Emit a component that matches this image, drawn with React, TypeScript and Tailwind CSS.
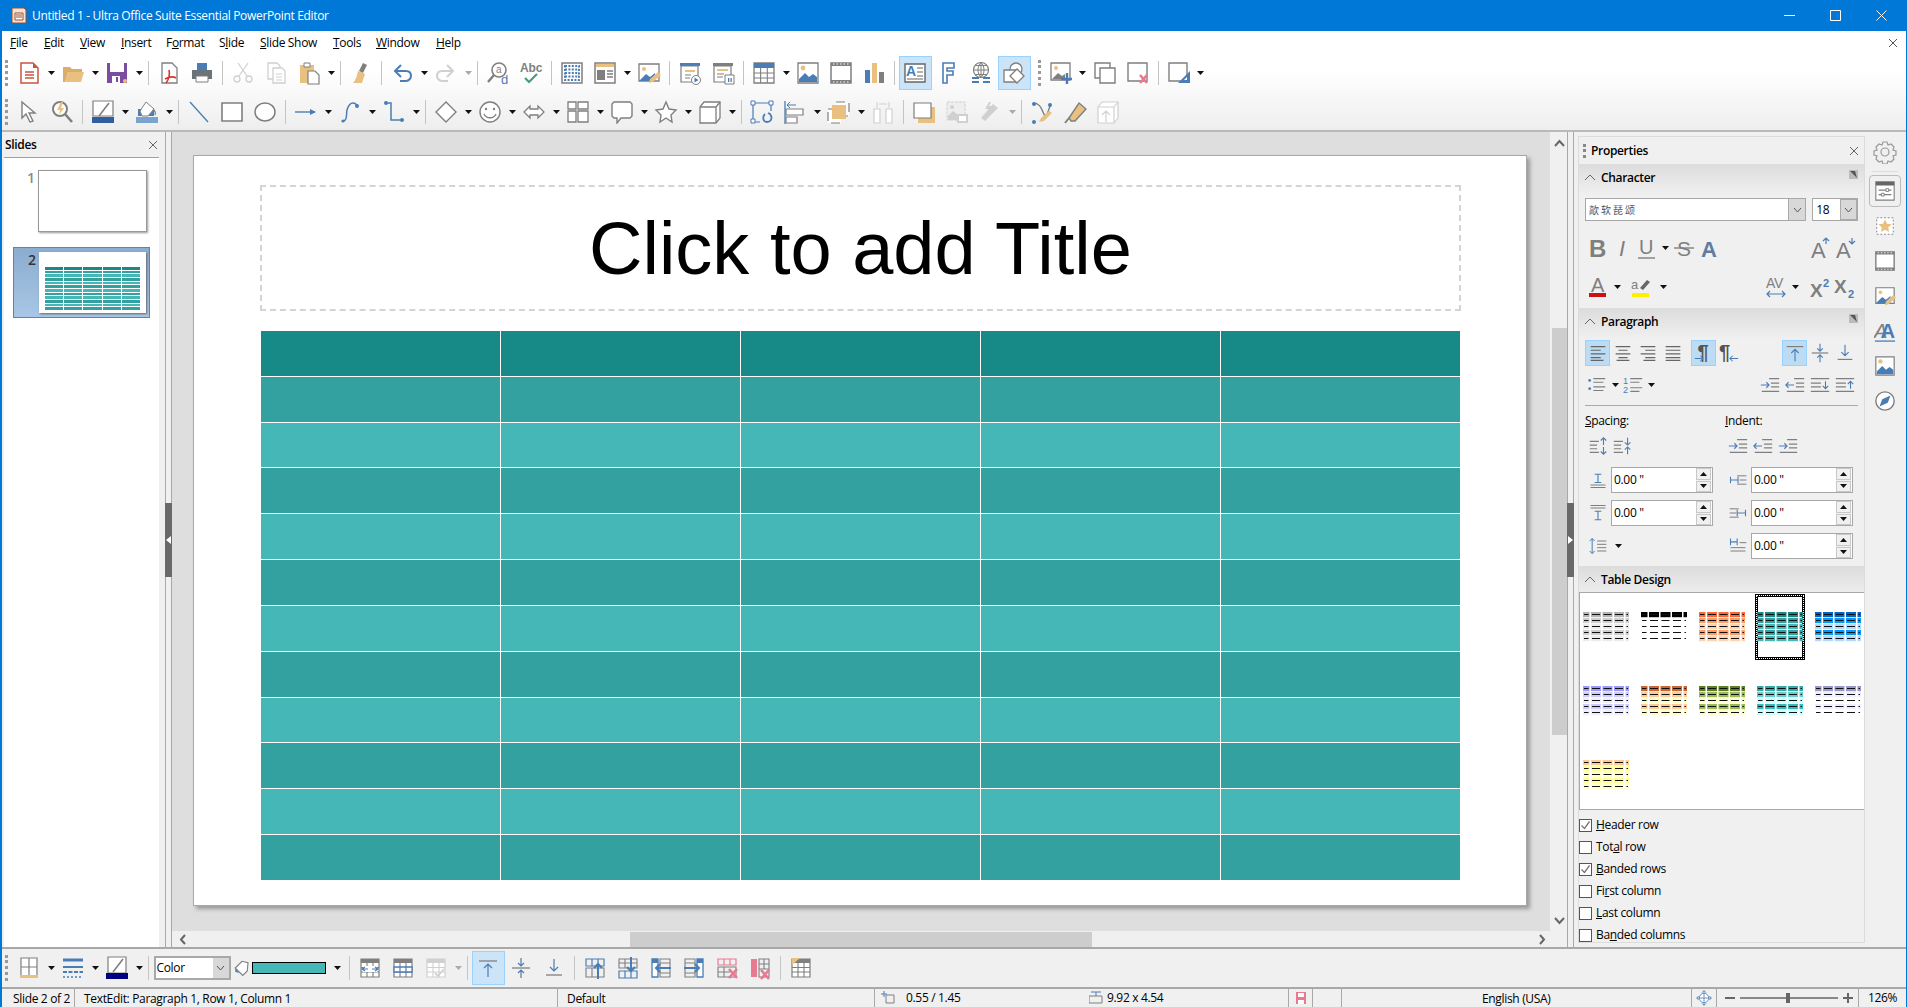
import { ReactNode } from "react";

const BL = "#4a7db5";
const GR = "#7f7f7f";
const OR = "#e9c07f";
const LG = "#d0d0d0";
const PK = "#e8798f";

const line = (d: string, c = GR, w = 1.5) => <path d={d} fill="none" stroke={c} strokeWidth={w} />;
const word = (t: string, x: number, y: number, s: number, c = GR, extra = {}) => (
    <text x={x} y={y} fontSize={s} fill={c} fontFamily="Liberation Sans, sans-serif" {...extra}>{t}</text>
);
const tableGrid = (c = GR, top = GR) => (
    <>
        <path d="M3 3h18v18H3z" fill="#fff" stroke={c} strokeWidth="1.2" />
        <path d="M3 3h18v4H3z" fill={top} />
        {line("M3 11.5h18M3 16h18M9 7v14M15 7v14", c, 1.1)}
    </>
);

const icons: Record<string, ReactNode> = {
    new: <><path d="M4 2h12l5 5v15H4z" fill="#fff" stroke="#c8553d" strokeWidth="1.5" /><path d="M16 2l5 5h-5z" fill="#c8553d" />{line("M8 11h9M8 14h9M8 17h9", "#c8553d", 1.3)}</>,
    open: <><path d="M2 21V6h7l2 2h10v3H7l-3 10z" fill="#d9ae6a" /><path d="M4 21l3-10h16l-3 10z" fill={OR} /></>,
    save: <><path d="M2 2h20v20H2z" fill="#7c4ca0" /><path d="M5 2h14v9H5z" fill="#fff" /><path d="M7 15h8v7H7z" fill="#fff" /><path d="M11 16h2v5h-2z" fill="#7c4ca0" /><circle cx="20" cy="20" r="2" fill={OR} /></>,
    pdf: <><path d="M5 2h10l5 5v15H5z" fill="#fff" stroke={GR} strokeWidth="1.3" />{line("M9 22c3-4 4-9 3-13M8 18c4-2 8-3 11-1", "#d8352a", 1.6)}</>,
    print: <><path d="M7 2h10v7H7z" fill="#4a7db5" /><path d="M2 9h20v9H2z" fill="#6b7278" /><path d="M6 15h12v6H6z" fill="#fff" stroke={GR} /></>,
    cut: <>{line("M7 2l9 13M17 2L8 15", LG, 1.3)}<circle cx="6" cy="18" r="3" fill="none" stroke={LG} strokeWidth="1.3" /><circle cx="18" cy="18" r="3" fill="none" stroke={LG} strokeWidth="1.3" /></>,
    copy: <><path d="M4 2h9l3 3v13H4z" fill="#fff" stroke={LG} strokeWidth="1.3" /><path d="M9 7h9l3 3v12H9z" fill="#fff" stroke={LG} strokeWidth="1.3" />{line("M12 13h6M12 16h6M12 19h6", LG, 1)}</>,
    paste: <><path d="M3 4h14v18H3z" fill={OR} /><path d="M7 2h6v4H7z" fill="#fff" stroke={GR} /><path d="M11 10h7l4 4v9H11z" fill="#fff" stroke={GR} strokeWidth="1.2" /></>,
    clear: <><path d="M14 2l4 2-4 8-4-2z" fill={GR} /><path d="M9 10l7 3-3 9H4c3-3 4-8 5-12z" fill={OR} /></>,
    undo: <>{line("M6 10h10c4 0 5 3 5 5s-2 5-5 5h-6", BL, 2)}{line("M11 4l-6 6 6 6", BL, 2)}</>,
    redo: <>{line("M18 10H8c-4 0-5 3-5 5s2 5 5 5h6", LG, 2)}{line("M13 4l6 6-6 6", LG, 2)}</>,
    find: <><circle cx="13" cy="9" r="7" fill="#fff" stroke={GR} strokeWidth="1.6" />{line("M8 14l-6 7", GR, 2.4)}{word("a", 10, 12, 10)}{word("d", 15, 23, 13, BL)}</>,
    spell: <>{word("Abc", 1, 11, 12, GR, { fontWeight: 700, textLength: 22 })}{line("M6 17l4 4 8-8", "#4e9a7f", 2.2)}</>,
    grid: <><path d="M2 2h20v20H2z" fill="#fff" stroke={GR} strokeWidth="1.5" /><path d="M5 5h14v14H5z" fill="none" stroke={BL} strokeWidth="2" strokeDasharray="2 1.4" /><path d="M5 8.5h14M5 12h14M5 15.5h14" stroke={BL} strokeWidth="1.8" strokeDasharray="2 1.4" /></>,
    view: <><path d="M2 2h20v20H2z" fill="#fff" stroke={GR} strokeWidth="1.5" /><path d="M3 3h18v3H3z" fill={OR} /><path d="M4 9h8v10H4z" fill={GR} />{line("M14 10h6M14 13h6M14 16h6", GR, 1.3)}</>,
    imgedit: <><path d="M2 3h20v17H2z" fill="#fff" stroke={GR} strokeWidth="1.3" /><circle cx="7" cy="8" r="2" fill={OR} /><path d="M2 20l7-7 4 3 5-4v8z" fill={BL} /><path d="M12 22l1-4 8-7 3 3-8 7z" fill={OR} /></>,
    show: <><path d="M2 2h20v3H2z" fill={BL} /><path d="M3 5h17v16H3z" fill="#fff" stroke={GR} strokeWidth="1.2" /><path d="M7 9h10v2H7z" fill={OR} />{line("M7 14h6M7 17h5", GR, 1.2)}<circle cx="18" cy="19" r="4.5" fill="#fff" stroke={GR} /><path d="M16.5 16.5l4 2.5-4 2.5z" fill={BL} /></>,
    present: <><path d="M2 2h20v3H2z" fill={GR} /><path d="M3 5h17v16H3z" fill="#fff" stroke={GR} strokeWidth="1.2" /><path d="M6 8h11v2H6z" fill={OR} />{line("M6 13h7M6 16h6", GR, 1.2)}<path d="M14 14h9v9h-9z" fill="#fff" stroke={GR} /><path d="M17 17h1.3v4H17zM19.5 17h1.3v4h-1.3z" fill={BL} /></>,
    table: <><path d="M2 2h20v20H2z" fill="#fff" stroke={GR} strokeWidth="1.3" /><path d="M2 2h20v5H2z" fill={BL} />{line("M2 12h20M2 17h20M8.6 7v15M15.3 7v15", GR, 1.1)}</>,
    image: <><path d="M2 2h20v20H2z" fill="#fff" stroke={GR} strokeWidth="1.3" /><circle cx="7" cy="7" r="2.4" fill={OR} /><path d="M3 21v-3l6-6 4 4 4-3 4 3v5z" fill={BL} /></>,
    movie: <><path d="M2 2h20v20H2z" fill="#fff" stroke={GR} strokeWidth="1.5" /><path d="M2 2h20v3H2zM2 19h20v3H2z" fill={GR} /><path d="M4 3h16M4 21h16" stroke="#fff" strokeDasharray="1.5 2" /></>,
    chart: <><path d="M3 9h5v13H3z" fill={BL} /><path d="M10 2h5v20h-5z" fill={OR} /><path d="M17 11h5v11h-5z" fill={GR} /></>,
    textbox: <><path d="M2 3h20v18H2z" fill="#fff" stroke="#666" strokeWidth="1.4" />{word("A", 3, 15, 14, BL, { fontWeight: 700 })}{line("M14 7h6M14 11h6M14 15h6M4 18h16", "#666", 1.1)}</>,
    fontwork: <path d="M7 2h11v5h-7v3h6v4h-6v8H7z" fill="#fff" stroke={BL} strokeWidth="1.6" />,
    link: <><circle cx="12" cy="9" r="7.5" fill="#fff" stroke={GR} strokeWidth="1.2" />{line("M4.5 9h15M12 1.5v15M6 4.5h12M6 13.5h12M12 1.5c-4 4-4 11 0 15M12 1.5c4 4 4 11 0 15", GR, 1)}{line("M3 17h7M14 17h7M3 21h7M14 21h7", BL, 2)}</>,
    shapes: <><circle cx="14" cy="8" r="6" fill="#fff" stroke={GR} strokeWidth="1.3" /><path d="M2 9h12v12H2z" fill="#fff" stroke={GR} strokeWidth="1.3" /><path d="M15 8l7 7-7 7-7-7z" fill="#fff" stroke={GR} strokeWidth="1.3" /></>,
    addimg: <><path d="M2 2h19v17H2z" fill="#fff" stroke={GR} strokeWidth="1.3" /><circle cx="7" cy="7" r="2" fill={OR} /><path d="M3 18l6-6 4 3 3-2v5z" fill={GR} />{line("M18 12v11M12 18h11", BL, 2.4)}</>,
    dup: <><path d="M2 2h15v15H2z" fill="#fff" stroke={GR} strokeWidth="1.4" /><path d="M7 7h15v15H7z" fill="#fff" stroke={GR} strokeWidth="1.4" /></>,
    del: <><path d="M2 2h19v18H2z" fill="#fff" stroke={GR} strokeWidth="1.4" />{line("M14 14l7 8M21 14l-7 8", PK, 2.6)}</>,
    master: <><path d="M2 2h18v18H2z" fill="#fff" stroke={GR} strokeWidth="1.4" /><path d="M11 22L23 10v12z" fill={BL} /><path d="M17 19h3v-3z" fill="#fff" /></>,
    select: <path d="M5 2l13 11h-6l4 8-3 1-4-8-4 4z" fill="#fff" stroke={GR} strokeWidth="1.4" />,
    zoom: <><circle cx="10" cy="9" r="7" fill="#fff" stroke={GR} strokeWidth="2" /><path d="M11 2L7 10h3l-1 5 5-7h-3l2-6z" fill={OR} />{line("M15 14l7 8", GR, 2.6)}</>,
    lineclr: <><path d="M2 1h20v15H2z" fill="#fff" stroke={GR} strokeWidth="1.2" />{line("M18 3L8 16", GR, 1.6)}<path d="M1 17h22v6H1z" fill="#2f5f9e" /></>,
    fillclr: <><path d="M3 9h16v7H3z" fill={BL} /><path d="M11 2l8 7-6 7H7L5 11z" fill="#fff" stroke={GR} />{line("M18 9c2 2 3 4 2 6", GR, 1.2)}<path d="M1 17h22v6H1z" fill="#7ba3cf" /></>,
    dline: line("M3 2l18 20", BL, 1.3),
    rect: <path d="M2 3h20v18H2z" fill="#fff" stroke={GR} strokeWidth="1.6" />,
    ellipse: <ellipse cx="12" cy="12" rx="10" ry="9" fill="#fff" stroke={GR} strokeWidth="1.5" />,
    arrowl: <>{line("M1 12h20", BL, 1.4)}<path d="M16 9l6 3-6 3z" fill={BL} /></>,
    curve: <>{line("M5 21c5 0 3-8 4-11s2-7 6-7c2 0 3 1 4 2", BL, 1.5)}<circle cx="19" cy="6" r="2" fill={BL} /><circle cx="5" cy="21" r="1.6" fill={BL} /></>,
    conn: <>{line("M4 3h5v17h10", BL, 1.5)}<circle cx="4" cy="3" r="2" fill={BL} /><circle cx="20" cy="20" r="2" fill={BL} /></>,
    diamond: <path d="M12 2l10 10-10 10L2 12z" fill="#fff" stroke={GR} strokeWidth="1.4" />,
    smile: <><circle cx="12" cy="12" r="10" fill="#fff" stroke={GR} strokeWidth="1.4" /><circle cx="8" cy="9" r="1.2" fill={GR} /><circle cx="16" cy="9" r="1.2" fill={GR} />{line("M6 14c2 5 10 5 12 0", GR, 1.3)}</>,
    dbl: <path d="M2 12l6-6v3h8V6l6 6-6 6v-3H8v3z" fill="#fff" stroke={GR} strokeWidth="1.3" />,
    flow: <><path d="M2 2h8v7H2zM12 2h10v7H12zM2 11h8v11H2zM12 11h10v11H12z" fill="#fff" stroke={GR} strokeWidth="1.3" /></>,
    callout: <path d="M4 2h16l2 2v12l-2 2h-9l-4 5v-5H4l-2-2V4z" fill="#fff" stroke={GR} strokeWidth="1.4" />,
    star: <path d="M12 2l3 7 7 1-5 5 1 7-6-4-6 4 1-7-5-5 7-1z" fill="#fff" stroke={GR} strokeWidth="1.4" />,
    cube: <><path d="M2 7l4-5h16v16l-4 5H2z" fill="#fff" stroke={GR} strokeWidth="1.3" />{line("M2 7h16v16M18 7l4-5", GR, 1.3)}</>,
    rotate: <>{line("M4 3h16M3 4v17M4 22h6M21 4v7", BL, 1.2)}<path d="M1 1h4v4H1zM19 1h4v4h-4zM1 19h4v4H1z" fill="#fff" stroke={BL} />{line("M15 14c-3 3-2 8 2 8s6-4 3-8l-2-1", BL, 1.8)}</>,
    align: <>{line("M2 1v23", BL, 1.3)}{line("M4 5h9M4 5l3-3M4 5l3 3", BL, 1)}<path d="M3 9h17v6H3zM3 17h11v6H3z" fill="#fff" stroke={GR} strokeWidth="1.2" /></>,
    arrange: <><path d="M9 2h13v14H9z" fill="#fff" stroke={GR} strokeWidth="1.2" strokeDasharray="9 5" /><path d="M1 9h13v14H1z" fill="#fff" stroke={GR} strokeWidth="1.2" strokeDasharray="9 5" /><path d="M5 5h14v14H5z" fill={OR} /></>,
    distrib: <><path d="M3 9h6v14H3zM15 9h6v14h-6z" fill="#fff" stroke={LG} strokeWidth="1.2" />{line("M6 2v6M18 2v6M8 4h8", LG, 1.1)}</>,
    shadow: <><path d="M6 7h17v16H6z" fill={OR} /><path d="M2 3h17v15H2z" fill="#fff" stroke={GR} strokeWidth="1.2" /></>,
    crop: <><path d="M2 2h18v18H2z" fill="#eee" stroke={LG} strokeDasharray="3 1" /><circle cx="7" cy="7" r="2" fill={LG} /><path d="M3 16l5-5 5 4v5H3z" fill={LG} /><path d="M13 15h9v7h-9z" fill="#fff" stroke={LG} strokeWidth="2" /></>,
    effects: <><path d="M7 21l-4-3 12-14 5 4z" fill={LG} /><path d="M11 2L7 9h4l-2 4 6-7h-4l2-4z" fill={LG} /></>,
    points: <>{line("M3 3c6 0 8 4 10 9s3 7 7-6", GR, 1.4)}<circle cx="4" cy="4" r="2" fill={BL} /><circle cx="20" cy="5" r="2" fill={BL} /><circle cx="4" cy="22" r="2" fill={BL} /><path d="M9 22l2-4 8-7 3 2-8 8z" fill={OR} /></>,
    glue: <><path d="M6 18L16 3l7 6-11 12H8z" fill={OR} stroke={GR} strokeWidth="1.4" />{line("M2 23l4-5", GR, 2)}</>,
    extrude: <><path d="M2 7l4-5h16v16l-4 5H2z" fill="#fff" stroke={LG} strokeWidth="1.2" />{line("M2 7h16v16M18 7l4-5M10 22V11M6 15l4-4 4 4", LG, 1.2)}</>,
    settings: <><circle cx="12" cy="12" r="4" fill="none" stroke="#999" strokeWidth="1.2" /><path d="M10 2h4l1 3 3-1 3 3-1 3 3 1v4l-3 1 1 3-3 3-3-1-1 3h-4l-1-3-3 1-3-3 1-3-3-1v-4l3-1-1-3 3-3 3 1z" fill="none" stroke="#999" strokeWidth="1.2" /></>,
    props: <><path d="M2 2h20v20H2z" fill="#fff" stroke={GR} strokeWidth="1.2" /><path d="M2 2h20v4H2z" fill="#666" />{line("M5 11h14M5 16h14", GR, 1.2)}<path d="M13 9.5h3v3h-3zM8 14.5h3v3H8z" fill="#fff" stroke={GR} /></>,
    gallery: <><path d="M3 3h18v18H3z" fill="#fff" stroke={GR} strokeDasharray="2 2" /><path d="M12 5l2.2 4.6 5 .6-3.7 3.4 1 5-4.5-2.5L7.500 18.600l1-5-3.700-3.400 5-.6z" fill={OR} /></>,
    aa: <>{word("A", 0, 20, 22, GR, { fontStyle: "italic" })}{word("A", 7, 20, 22, BL, { fontWeight: 700 })}{line("M1 23h22", BL, 1.4)}</>,
    nav: <><circle cx="12" cy="12" r="10" fill="#fff" stroke={GR} strokeWidth="1.5" /><path d="M18 6l-3 8-9 4 3-8z" fill={BL} /></>,
    fit: <><circle cx="12" cy="12" r="7" fill="#fff" stroke={BL} strokeWidth="1.2" />{line("M12 1v22M1 12h22", BL, 1.2)}{line("M9 4l3-3 3 3M9 20l3 3 3-3M4 9l-3 3 3 3M20 9l3 3-3 3", BL, 1.2)}</>,
    bold: word("B", 3, 21, 24, GR, { fontWeight: 700 }),
    ital: word("I", 8, 20, 22, GR, { fontStyle: "italic" }),
    under: <>{word("U", 4, 18, 20, GR)}{line("M3 22h17", GR, 1.4)}</>,
    strike: <>{word("S", 5, 20, 21, GR)}{line("M2 12h20", GR, 1.4)}</>,
    ashadow: <>{word("A", 4, 21, 22, "#5f7d9e", { fontWeight: 700 })}</>,
    grow: <>{word("A", 3, 22, 22, GR)}{line("M18 8V2M15 5l3-3 3 3", BL, 1.2)}</>,
    shrink: <>{word("A", 3, 22, 22, GR)}{line("M19 2v6M16 5l3 3 3-3", BL, 1.2)}</>,
    fontclr: <>{word("A", 5, 17, 20, GR)}<path d="M3 18h17v4H3z" fill="#cc1111" /></>,
    hilite: <>{word("a", 2, 14, 13, GR)}<path d="M11 13l7-8 3 2-7 8z" fill="#666" /><path d="M3 18h17v4H3z" fill="#ffee00" /></>,
    kern: <>{word("AV", 2, 13, 14, GR)}{line("M3 19h18M6 16l-3 3 3 3M18 16l3 3-3 3", BL, 1.2)}</>,
    sup: <>{word("X", 2, 22, 19, GR, { fontWeight: 700 })}{word("2", 15, 12, 11, BL, { fontWeight: 700 })}</>,
    sub: <>{word("X", 1, 18, 19, GR, { fontWeight: 700 })}{word("2", 15, 23, 11, BL, { fontWeight: 700 })}</>,
    left: line("M4 5h16M4 9h11M4 13h16M4 17h11M4 20h14", "#666", 1.2),
    center: line("M4 5h16M7 9h10M4 13h16M7 17h10M5 20h14", "#666", 1.2),
    right: line("M4 5h16M9 9h11M4 13h16M9 17h11M7 20h13", "#666", 1.2),
    just: line("M4 5h16M4 9h16M4 13h16M4 17h16M4 20h16", "#666", 1.2),
    ltr: <>{word("¶", 5, 19, 22, "#555", { fontWeight: 700 })}{line("M2 18h9M8 15l3 3-3 3", BL, 1.1)}</>,
    rtl: <>{word("¶", 1, 19, 22, "#555", { fontWeight: 700 })}{line("M13 18h9M16 15l-3 3 3 3", BL, 1.1)}</>,
    vtop: <>{line("M3 5h18", GR, 1.3)}{line("M12 21V8M8 12l4-4 4 4", BL, 1.2)}</>,
    vmid: <>{line("M3 12h18", GR, 1.3)}{line("M12 2v8M9 7l3 3 3-3M12 22v-8M9 17l3-3 3 3", BL, 1.2)}</>,
    vbot: <>{line("M4 19h16", GR, 1.3)}{line("M12 3v12M8 11l4 4 4-4", BL, 1.2)}</>,
    bullet: <><circle cx="4" cy="7" r="1.500" fill={BL} /><circle cx="4" cy="16" r="1.500" fill={BL} />{line("M8 5h13M8 9h11M8 14h13M8 18h11", GR, 1.2)}</>,
    number: <>{word("1", 1, 11, 10, BL)}{word("2", 1, 21, 10, BL)}{line("M9 5h13M9 9h10M9 15h13M9 19h10", GR, 1.2)}</>,
    incind: <>{line("M11 5h11M13 10h9M13 14h9M3 19h19", GR, 1.2)}{line("M2 12h9M8 9l3 3-3 3", BL, 1.2)}</>,
    decind: <>{line("M11 5h11M13 10h9M13 14h9M3 19h19", GR, 1.2)}{line("M11 12H2M5 9l-3 3 3 3", BL, 1.2)}</>,
    downsp: <>{line("M2 5h20M2 10h11M2 14h11M2 19h20", GR, 1.2)}{line("M18 8v8M15 13l3 3 3-3", BL, 1.2)}</>,
    upsp: <>{line("M2 5h20M2 10h11M2 14h11M2 19h20", GR, 1.2)}{line("M18 16V8M15 11l3-3 3 3", BL, 1.2)}</>,
    spinc: <>{line("M3 7h10M3 11h8M3 15h8M3 19h10", GR, 1.2)}{line("M18 11V3M15 6l3-3 3 3M18 13v8M15 18l3 3 3-3", BL, 1.2)}</>,
    spdec: <>{line("M2 7h10M2 11h8M2 15h8M2 19h10", GR, 1.2)}{line("M17 3v8M14 8l3 3 3-3M17 21v-8M14 16l3-3 3 3", BL, 1.2)}</>,
    above: <>{line("M3 18h18M3 21h18", GR, 1.2)}{line("M8 5h8M12 5v10M8 15h8", BL, 1.3)}</>,
    below: <>{line("M3 3h18M3 6h18", GR, 1.2)}{line("M8 10h8M12 10v10M8 20h8", BL, 1.3)}</>,
    befor: <>{line("M11 7h11M11 17h11M14 12h8", GR, 1.2)}{line("M3 8v8M3 12h9M12 8v8", BL, 1.3)}</>,
    after: <>{line("M2 7h11M2 17h11M2 12h8", GR, 1.2)}{line("M21 8v8M11 12h10M11 8v8", BL, 1.3)}</>,
    first: <>{line("M14 8h8M3 14h18M3 18h18", GR, 1.2)}{line("M3 3v8M11 3v8M3 7h8", BL, 1.3)}</>,
    lnsp: <>{line("M11 6h11M11 10h11M11 14h11M11 18h11", GR, 1.2)}{line("M5 3v18M2 6l3-3 3 3M2 18l3 3 3-3", BL, 1.2)}</>,
    bdr: <><path d="M4 2h16v18H4z" fill="#fff" stroke={GR} strokeWidth="1.2" />{line("M4 11h16M12 2v18", GR, 1.2)}<path d="M3 19h18v3H3z" fill={OR} /></>,
    bstyle: <>{line("M2 4h20", BL, 3)}{line("M2 11h20", BL, 2)}<path d="M2 16h20" stroke={BL} strokeWidth="2" strokeDasharray="4 1.500" /><path d="M2 21h20" stroke={BL} strokeWidth="1.500" strokeDasharray="2 2" /></>,
    bclr: <><path d="M3 1h18v16H3z" fill="#fff" stroke={GR} strokeWidth="1.2" />{line("M18 3L8 16", GR, 1.6)}<path d="M1 17h22v6H1z" fill="#000080" /></>,
    tmerge: <>{tableGrid()}<path d="M5 10h14v6H5z" fill="#fff" />{line("M4 13h6M7 11l-3 2 3 2M20 13h-6M17 11l3 2-3 2", BL, 1.2)}</>,
    tsplit: <>{tableGrid()}<path d="M3 11h18v5H3z" fill="#fff" stroke={BL} strokeWidth="1.3" />{line("M9 11v5M15 11v5", BL, 1.2)}</>,
    tprot: <>{tableGrid(LG, LG)}{line("M11 17l3 3 6-7", LG, 1.8)}</>,
    rowup: <>{line("M3 3h18v7H3zM9 3v7M15 3v7", BL, 1.2)}{line("M3 12h18v9H3zM9 12v9M15 12v9", GR, 1.1)}{line("M15 23V8M11 12l4-4 4 4", BL, 2)}</>,
    rowdn: <>{line("M3 3h18v9H3zM9 3v9M15 3v9M3 7h18", GR, 1.1)}{line("M3 15h18v7H3zM9 15v7M15 15v7", BL, 1.2)}{line("M15 1v14M11 11l4 4 4-4", BL, 2)}</>,
    colleft: <><path d="M3 3h6v18H3z" fill="#fff" stroke={BL} strokeWidth="1.3" /><path d="M3 3h6v4H3z" fill={BL} />{line("M11 3h10v18H11zM11 7h10M11 12h10M11 17h10", GR, 1.1)}{line("M22 12H7M11 8l-4 4 4 4", BL, 2)}</>,
    colright: <><path d="M15 3h6v18h-6z" fill="#fff" stroke={BL} strokeWidth="1.3" /><path d="M15 3h6v4h-6z" fill={BL} />{line("M3 3h10v18H3zM3 7h10M3 12h10M3 17h10", GR, 1.1)}{line("M2 12h15M13 8l4 4-4 4", BL, 2)}</>,
    rowdel: <>{line("M3 3h18v6H3zM9 3v6M15 3v6", PK, 1.2)}{line("M3 11h18v10H3zM9 11v10M3 16h12", GR, 1.1)}{line("M14 13l8 9M22 13l-8 9", PK, 2.6)}</>,
    coldel: <><path d="M3 3h6v18H3z" fill={PK} />{line("M11 3h10v18H11zM11 8h10M11 13h10M16 3v10", GR, 1.1)}{line("M13 14l8 9M21 14l-8 9", PK, 2.6)}</>,
    tstyle: <>{tableGrid()}<path d="M3 2h8l-8 7z" fill={OR} /></>,
};

function Icon({ name, size = 24 }: { name: string; size?: number }) {
    return <svg width={size} height={size} viewBox="0 0 24 24" className="shrink-0">{icons[name]}</svg>;
}

function Arrow() {
    return <svg width="7" height="4" className="shrink-0"><path d="M0 0h7L3.500 4z" fill="#111" /></svg>;
}

function Chevron({ d }: { d: string }) {
    return <svg width="11" height="9" viewBox="0 0 11 9"><path d={d} fill="none" stroke="#666" strokeWidth="2" /></svg>;
}

// a: drop arrow, s: separator, h/H: drag handle, ! in front: pressed button
function Tool({ item }: { item: string }) {
    if (item === "a") return <div className="w-[11px] h-[34px] flex items-center justify-center shrink-0"><Arrow /></div>;
    if (item === "da") return <div className="w-[11px] h-[34px] flex items-center justify-center shrink-0"><svg width="7" height="4"><path d="M0 0h7L3.500 4z" fill="#aaa" /></svg></div>;
    if (item === "s") return <div className="w-[8px] h-[24px] flex justify-center shrink-0"><div className="w-px h-full bg-[#c4c4c4]" /></div>;
    if (item === "h") return <div className="w-[7.5px] h-[26px] shrink-0 border-l-[3px] border-dotted border-[#999] ml-[3px]" />;
    if (item === "H") return <div className="w-[6.5px] h-[26px] shrink-0 border-l-[3px] border-dotted border-[#999] ml-[7px]" />;
    const active = item.startsWith("!");
    return (
        <div className={active
            ? "w-[33px] h-[34px] flex items-center justify-center shrink-0 bg-[#cce4f7] border border-[#99d1ff]"
            : "w-[33px] h-[34px] flex items-center justify-center shrink-0"}>
            <Icon name={active ? item.slice(1) : item} />
        </div>
    );
}

const row1 = "new a open a save a s pdf print s cut copy paste a s clear s undo a redo da s find spell s grid view a imgedit s show present s table a image movie chart s !textbox fontwork link !shapes H addimg a dup del s master a".split(" ");
const row2 = "select zoom s lineclr a fillclr a s dline rect ellipse s arrowl a curve a conn a s diamond a smile a dbl a flow a callout a star a cube a s rotate align a arrange a distrib s shadow crop effects da s points glue extrude".split(" ");
const row3 = "bdr a bstyle a bclr a s".split(" ");
const row4 = "tmerge tsplit tprot da s !vtop vmid vbot s rowup rowdn colleft colright rowdel coldel s tstyle".split(" ");

const menus: [string, string, string, number][] = [
    ["", "F", "ile", 34], ["", "E", "dit", 36], ["", "V", "iew", 41], ["", "I", "nsert", 45], ["F", "o", "rmat", 53],
    ["S", "l", "ide", 41], ["", "S", "lide Show", 73], ["", "T", "ools", 43], ["", "W", "indow", 60], ["", "H", "elp", 40],
];

const thumbs = [
    ["#b4b4b4", "#cfcfcf", "#ececec", "#cfcfcf", "#ececec"],
    ["#000000", "#ffffff", "#ffffff", "#ffffff", "#ffffff"],
    ["#ff6633", "#ff9c66", "#ffd3b0", "#ff9c66", "#ffd3b0"],
    ["#178a88", "#32a1a0", "#45b7b7", "#32a1a0", "#45b7b7"],
    ["#0066cc", "#0099ff", "#b3d9ff", "#0099ff", "#b3d9ff"],
    ["#9999ff", "#ccccff", "#eeeeff", "#ccccff", "#eeeeff"],
    ["#cc6633", "#ffcc99", "#ffffcc", "#ffcc99", "#ffffcc"],
    ["#5c8020", "#99bb55", "#ffffcc", "#99bb55", "#ffffcc"],
    ["#33aaaa", "#66cccc", "#ccffff", "#33bbbb", "#ccffff"],
    ["#9999cc", "#eeeeff", "#ffffff", "#eeeeff", "#ffffff"],
    ["#ffcc99", "#ffff99", "#ffffcc", "#ffff99", "#ffffcc"],
];

function TableThumb({ colors, selected }: { colors: string[]; selected: boolean }) {
    const cols: [number, number][] = [[0, 6.5], [8, 10], [19.5, 10], [31, 10], [42.5, 3.5]];
    return (
        <div className={selected
            ? "w-[50px] h-[66px] flex items-center justify-center border-[3px] border-black outline-1 -outline-offset-2 outline-dotted outline-white"
            : "w-[50px] h-[66px] flex items-center justify-center"}>
            <svg width="46" height="30" className="shrink-0">
                {colors.map((c, r) => cols.map(([x, w]) => (
                    <g key={`${r}-${x}`}>
                        <rect x={x} y={r * 6} width={w} height={5.200} fill={c} />
                        <rect x={x + 1} y={r * 6 + 2} width={Math.max(w - 2, 1)} height={1} fill="#111" />
                    </g>
                )))}
            </svg>
        </div>
    );
}

function SlideTable() {
    return (
        <div className="grid grid-cols-5 grid-rows-12 h-full w-full bg-white gap-[1px]">
            {Array.from({ length: 60 }).map((_, i) => {
                const r = Math.floor(i / 5);
                const bg = r === 0 ? "bg-[#178a88]" : r % 2 === 1 ? "bg-[#32a1a0]" : "bg-[#45b7b7]";
                return <div key={i} className={bg} />;
            })}
        </div>
    );
}

function Spin({ value }: { value: string }) {
    return (
        <div className="w-[102px] h-[26px] border border-[#a8a8a8] bg-white flex items-center justify-between pl-[2px] shrink-0">
            <span className="text-[12px] text-black">{value}</span>
            <div className="w-[15px] h-[24px] flex flex-col gap-px bg-[#f0f0f0] mr-[1px]">
                <div className="flex-1 flex items-center justify-center border border-[#c8c8c8]"><svg width="7" height="4"><path d="M0 4h7L3.500 0z" fill="#111" /></svg></div>
                <div className="flex-1 flex items-center justify-center border border-[#c8c8c8]"><svg width="7" height="4"><path d="M0 0h7L3.500 4z" fill="#111" /></svg></div>
            </div>
        </div>
    );
}

function PanelHead({ title, more }: { title: string; more?: boolean }) {
    return (
        <div className="h-[31px] flex items-start pt-[5px] pl-[5px] pr-[6px] bg-gradient-to-b from-[#dcdcdc] to-[#f0f0f0]">
            <svg width="12" height="8" viewBox="0 0 12 8" className="mt-[4px]"><path d="M1 7l5-5 5 5" fill="none" stroke="#666" /></svg>
            <span className="ml-[5px] text-[12px] font-semibold text-black leading-[18px]">{title}</span>
            {more && (
                <svg width="9" height="9" className="ml-auto mt-[1px]"><path d="M0 0h9v9H0z" fill="#bbb" /><path d="M1 1h5L8 8z" fill="#555" /></svg>
            )}
        </div>
    );
}

function Check({ label, on }: { label: ReactNode; on?: boolean }) {
    return (
        <div className="h-[22px] flex items-center">
            <div className="w-[13px] h-[13px] border border-[#555] bg-white flex items-center justify-center">
                {on && <svg width="11" height="11"><path d="M1.500 5.500l3 3 5-7" fill="none" stroke="#777" strokeWidth="1.300" /></svg>}
            </div>
            <span className="ml-[4px] text-[12px] text-black">{label}</span>
        </div>
    );
}

function Sidebar() {
    return (
        <div className="w-[287px] h-[807px] mt-[4px] ml-[4px] border border-[#dcdcdc] overflow-hidden">
            <div className="h-[27px] flex items-center pl-[4px] pr-[5px]">
                <div className="w-[3px] h-[14px] border-l-[3px] border-dotted border-[#888]" />
                <span className="ml-[5px] text-[12px] font-semibold text-black">Properties</span>
                <svg width="10" height="10" className="ml-auto"><path d="M1 1l8 8M9 1l-8 8" stroke="#666" /></svg>
            </div>

            <PanelHead title="Character" more />
            <div className="px-[6px] h-[110px]">
                <div className="flex gap-[6px] mt-[3px]">
                    <div className="w-[222px] h-[23px] border border-[#a8a8a8] bg-white flex items-center justify-between">
                        <span className="ml-[3px] text-[10px] tracking-[2px] text-[#555] font-['Noto_Sans_CJK_SC',sans-serif]">歊软琵颂</span>
                        <div className="w-[17px] h-[21px] bg-[#d8d8d8] border-l border-[#aaa] flex items-center justify-center"><svg width="9" height="6"><path d="M1 1l3.500 4L8 1" fill="none" stroke="#555" /></svg></div>
                    </div>
                    <div className="w-[46px] h-[23px] border border-[#a8a8a8] bg-white flex items-center justify-between">
                        <span className="ml-[3px] text-[12px] text-black">18</span>
                        <div className="w-[17px] h-[21px] bg-[#d8d8d8] border border-[#aaa] flex items-center justify-center"><svg width="9" height="6"><path d="M1 1l3.500 4L8 1" fill="none" stroke="#555" /></svg></div>
                    </div>
                </div>
                <div className="flex items-center mt-[14px] h-[26px] pl-0">
                    <div className="w-[25px] flex justify-center"><Icon name="bold" /></div>
                    <div className="w-[25px] flex justify-center"><Icon name="ital" /></div>
                    <div className="w-[24px] flex justify-center"><Icon name="under" /></div>
                    <div className="w-[12px] flex justify-center"><Arrow /></div>
                    <div className="w-[26px] flex justify-center"><Icon name="strike" /></div>
                    <div className="w-[24px] flex justify-center"><Icon name="ashadow" /></div>
                    <div className="ml-auto w-[25px] flex justify-center"><Icon name="grow" /></div>
                    <div className="w-[25px] flex justify-center mr-[1px]"><Icon name="shrink" /></div>
                </div>
                <div className="flex items-center mt-[13px] h-[26px]">
                    <div className="w-[25px] flex justify-center"><Icon name="fontclr" /></div>
                    <div className="w-[14px] flex justify-center"><Arrow /></div>
                    <div className="w-[34px] flex justify-center"><Icon name="hilite" /></div>
                    <div className="w-[10px] flex justify-center"><Arrow /></div>
                    <div className="ml-auto w-[26px] flex justify-center"><Icon name="kern" /></div>
                    <div className="w-[12px] flex justify-center"><Arrow /></div>
                    <div className="w-[6px]" />
                    <div className="w-[25px] flex justify-center"><Icon name="sup" /></div>
                    <div className="w-[25px] flex justify-center mr-[1px]"><Icon name="sub" /></div>
                </div>
            </div>

            <PanelHead title="Paragraph" more />
            <div className="px-[6px] h-[226px]">
                <div className="flex items-center h-[26px] mt-[1px]">
                    <div className="w-[25px] h-[26px] flex justify-center items-center bg-[#bcdcf4] border border-[#99d1ff]"><Icon name="left" size={22} /></div>
                    <div className="w-[25px] flex justify-center"><Icon name="center" size={22} /></div>
                    <div className="w-[25px] flex justify-center"><Icon name="right" size={22} /></div>
                    <div className="w-[25px] flex justify-center"><Icon name="just" size={22} /></div>
                    <div className="w-[6px]" />
                    <div className="w-[25px] h-[26px] flex justify-center items-center bg-[#bcdcf4] border border-[#99d1ff]"><Icon name="ltr" size={22} /></div>
                    <div className="w-[25px] flex justify-center"><Icon name="rtl" size={22} /></div>
                    <div className="ml-auto w-[25px] h-[26px] flex justify-center items-center bg-[#bcdcf4] border border-[#99d1ff]"><Icon name="vtop" size={22} /></div>
                    <div className="w-[25px] flex justify-center"><Icon name="vmid" size={22} /></div>
                    <div className="w-[25px] flex justify-center mr-[1px]"><Icon name="vbot" size={22} /></div>
                </div>
                <div className="flex items-center h-[26px] mt-[6px]">
                    <div className="w-[24px] flex justify-center"><Icon name="bullet" size={22} /></div>
                    <div className="w-[12px] flex justify-center"><Arrow /></div>
                    <div className="w-[23px] flex justify-center"><Icon name="number" size={22} /></div>
                    <div className="w-[14px] flex justify-center"><Arrow /></div>
                    <div className="ml-auto w-[25px] flex justify-center"><Icon name="incind" size={22} /></div>
                    <div className="w-[25px] flex justify-center"><Icon name="decind" size={22} /></div>
                    <div className="w-[25px] flex justify-center"><Icon name="downsp" size={22} /></div>
                    <div className="w-[25px] flex justify-center mr-[1px]"><Icon name="upsp" size={22} /></div>
                </div>
                <div className="h-px bg-[#aaa] mt-[7px]" />
                <div className="flex mt-[7px] h-[16px] text-[12px] text-black leading-[16px]">
                    <div className="w-[140px]"><u>S</u>pacing:</div>
                    <div><u>I</u>ndent:</div>
                </div>
                <div className="flex mt-[6px] h-[24px]">
                    <div className="w-[140px] flex">
                        <div className="w-[25px] flex justify-center"><Icon name="spinc" size={22} /></div>
                        <div className="w-[25px] flex justify-center"><Icon name="spdec" size={22} /></div>
                    </div>
                    <div className="flex">
                        <div className="w-[25px] flex justify-center"><Icon name="incind" size={22} /></div>
                        <div className="w-[25px] flex justify-center"><Icon name="decind" size={22} /></div>
                        <div className="w-[25px] flex justify-center"><Icon name="incind" size={22} /></div>
                    </div>
                </div>
                <div className="flex mt-[8px]">
                    <div className="w-[140px] flex flex-col gap-[7px]">
                        <div className="flex items-center"><div className="w-[26px] flex justify-center"><Icon name="above" size={20} /></div><Spin value={'0.00 "'} /></div>
                        <div className="flex items-center"><div className="w-[26px] flex justify-center"><Icon name="below" size={20} /></div><Spin value={'0.00 "'} /></div>
                        <div className="flex items-center h-[26px]"><div className="w-[26px] flex justify-center"><Icon name="lnsp" size={20} /></div><div className="ml-[4px]"><Arrow /></div></div>
                    </div>
                    <div className="flex flex-col gap-[7px]">
                        <div className="flex items-center"><div className="w-[26px] flex justify-center"><Icon name="befor" size={20} /></div><Spin value={'0.00 "'} /></div>
                        <div className="flex items-center"><div className="w-[26px] flex justify-center"><Icon name="after" size={20} /></div><Spin value={'0.00 "'} /></div>
                        <div className="flex items-center"><div className="w-[26px] flex justify-center"><Icon name="first" size={20} /></div><Spin value={'0.00 "'} /></div>
                    </div>
                </div>
            </div>

            <PanelHead title="Table Design" />
            <div className="w-[286px] h-[218px] -mt-[5px] border border-[#a8a8a8] bg-white pl-[1px] pt-[1px] grid grid-cols-[repeat(5,50px)] auto-rows-[66px] gap-[8px] content-start">
                {thumbs.map((t, i) => <TableThumb key={i} colors={t} selected={i === 3} />)}
            </div>
            <div className="mt-[4px]">
                <Check label={<><u>H</u>eader row</>} on />
                <Check label={<>Tot<u>a</u>l row</>} />
                <Check label={<><u>B</u>anded rows</>} on />
                <Check label={<>Fi<u>r</u>st column</>} />
                <Check label={<><u>L</u>ast column</>} />
                <Check label={<>Ba<u>n</u>ded columns</>} />
            </div>
        </div>
    );
}

function Rail() {
    const rest = ["gallery", "movie", "imgedit", "aa", "image", "nav"];
    return (
        <div className="w-[39px] flex flex-col items-center pt-[8px]">
            <Icon name="settings" />
            <div className="w-[26px] h-px bg-[#ddd] mt-[7px]" />
            <div className="w-[32px] h-[32px] mt-[3px] rounded-[4px] border border-[#bbb] flex items-center justify-center"><Icon name="props" size={22} /></div>
            <div className="flex flex-col gap-[13px] mt-[8px]">
                {rest.map(n => <Icon key={n} name={n} size={22} />)}
            </div>
        </div>
    );
}

function Splitter({ arrowLeft }: { arrowLeft?: boolean }) {
    return (
        <div className="w-[7px] shrink-0 border-x border-[#a8a8a8] relative">
            <div className="absolute -left-px top-[371px] w-[7px] h-[74px] bg-[#696969] flex items-center justify-center">
                <svg width="5" height="8"><path d={arrowLeft ? "M5 0v8L0 4z" : "M0 0v8l5-4z"} fill="#fff" /></svg>
            </div>
        </div>
    );
}

export default function App() {
    return (
        <div className="w-[1907px] h-[1007px] overflow-hidden flex flex-col bg-[#f0f0f0] border-l-2 border-r border-[#0078d7] text-[12px] font-['Open_Sans',sans-serif] tracking-[-0.33px]">
            <div className="h-[31px] shrink-0 bg-[#0078d7] flex items-center text-white pl-[9px]">
                <svg width="16" height="17" viewBox="0 0 16 17"><path d="M1 1h12l2 2v13H1z" fill="#f4e4d8" stroke="#9a4a2a" /><path d="M4 6h8v7H4z" fill="#fff" stroke="#9a4a2a" /><path d="M5 8h6M5 10h6" stroke="#9a4a2a" /></svg>
                <span className="ml-[5px]">Untitled 1 - Ultra Office Suite Essential PowerPoint Editor</span>
                <div className="ml-auto flex items-center">
                    <div className="w-[46px] flex justify-center"><svg width="11" height="11"><path d="M0 5.500h11" stroke="#fff" /></svg></div>
                    <div className="w-[46px] flex justify-center"><svg width="11" height="11"><path d="M.5.500h10v10H.5z" fill="none" stroke="#fff" /></svg></div>
                    <div className="w-[46px] flex justify-center mr-[2px]"><svg width="11" height="11"><path d="M.5.500l10 10M10.500.500l-10 10" stroke="#fff" /></svg></div>
                </div>
            </div>

            <div className="h-[101px] shrink-0 bg-gradient-to-b from-white from-40% to-[#eeeeee] border-b-2 border-[#b9b9b9]">
                <div className="h-[24px] flex items-center pl-[8px] pr-[8px] text-black">
                    {menus.map(([a, b, c, w]) => (
                        <div key={b + c} className="shrink-0" style={{ width: w }}>{a}<u>{b}</u>{c}</div>
                    ))}
                    <svg width="10" height="10" className="ml-auto"><path d="M1 1l8 8M9 1l-8 8" stroke="#555" /></svg>
                </div>
                <div className="h-[36px] flex items-center"><Tool item="h" />{row1.map((t, i) => <Tool key={i} item={t} />)}</div>
                <div className="h-[4px]" />
                <div className="h-[34px] flex items-center"><Tool item="h" />{row2.map((t, i) => <Tool key={i} item={t} />)}</div>
            </div>

            <div className="h-[815px] shrink-0 flex">
                <div className="w-[163px] shrink-0 flex flex-col">
                    <div className="h-[25px] flex items-center justify-between pl-[3px] pr-[7px] text-black text-[12px] font-semibold">
                        <span>Slides</span>
                        <svg width="10" height="10"><path d="M1 1l8 8M9 1l-8 8" stroke="#666" /></svg>
                    </div>
                    <div className="flex-1 ml-[2px] mr-[6px] bg-white border-t border-[#a0a0a0]">
                        <div className="flex pl-[23px] pt-[12px] h-[89px]">
                            <span className="w-[11px] text-[14px] leading-[16px] text-[#8a8a8a] font-semibold">1</span>
                            <div className="w-[109px] h-[62px] bg-white border border-[#999] shadow-[1px_1px_2px_#999]" />
                        </div>
                        <div className="ml-[9px] w-[137px] h-[71px] border border-[#5f84aa] bg-gradient-to-b from-[#8baccf] to-[#a8c7e6] flex pl-[14px] pt-[4px]">
                            <span className="w-[11px] text-[14px] leading-[16px] text-[#333] font-semibold">2</span>
                            <div className="w-[107px] h-[61px] bg-white shadow-[1px_1px_2px_#666] px-[6px] pt-[15px] pb-[3px]">
                                <SlideTable />
                            </div>
                        </div>
                    </div>
                </div>
                <Splitter arrowLeft />

                <div className="w-[1395px] shrink-0 flex flex-col">
                    <div className="h-[799px] flex">
                        <div className="w-[1378px] h-full bg-[#dedede] pl-[21px] pt-[23px]">
                            <div className="w-[1334px] h-[751px] bg-white border border-[#a8a8a8] shadow-[3px_3px_4px_#999] pl-[66px] pt-[29px]">
                                <div className="w-[1201px] h-[126px] border-2 border-dashed border-[#d4d4d4] flex items-center justify-center text-[74px] text-black tracking-normal font-['Liberation_Sans',sans-serif]">Click to add Title</div>
                                <div className="w-[1199px] h-[549px] ml-[1px] mt-[20px]"><SlideTable /></div>
                            </div>
                        </div>
                        <div className="w-[16px] ml-px flex flex-col items-center relative">
                            <div className="h-[20px] flex items-center"><Chevron d="M1 8l4.500-5L10 8" /></div>
                            <div className="w-[15px] h-[407px] bg-[#cdcdcd] mt-[176px]" />
                            <div className="mt-auto h-[20px] flex items-center"><Chevron d="M1 1l4.500 5L10 1" /></div>
                        </div>
                    </div>
                    <div className="h-[16px] flex items-center">
                        <div className="w-[20px] flex justify-center"><svg width="7" height="11"><path d="M6 1L2 5.500 6 10" fill="none" stroke="#666" strokeWidth="2" /></svg></div>
                        <div className="w-[462px] h-[15px] bg-[#cdcdcd] ml-[438px]" />
                        <div className="ml-auto mr-[21px]"><svg width="7" height="11"><path d="M1 1l4 4.500L1 10" fill="none" stroke="#666" strokeWidth="2" /></svg></div>
                    </div>
                </div>

                <Splitter />
                <Sidebar />
                <Rail />
            </div>

            <div className="h-[40px] shrink-0 border-t-2 border-[#a8a8a8] flex items-center">
                <Tool item="h" />
                {row3.map((t, i) => <Tool key={i} item={t} />)}
                <div className="w-[77px] h-[24px] ml-[1px] border-2 border-[#a8a8a8] bg-white flex items-center justify-between text-black pl-[1px]">
                    Color
                    <div className="w-[16px] h-[20px] bg-[#d8d8d8] flex items-center justify-center"><svg width="9" height="6"><path d="M1 1l3.500 4L8 1" fill="none" stroke="#555" /></svg></div>
                </div>
                <svg width="18" height="18" viewBox="0 0 24 24" className="ml-[2px]"><path d="M3 12l9-9 8 2-1 11-6 6z" fill="#fff" stroke={GR} strokeWidth="1.5" /><path d="M3 12v5l5 2z" fill={BL} /></svg>
                <div className="w-[74px] h-[12px] ml-[1px] border border-black bg-[#45b7b7]" />
                <div className="w-[17px] ml-[3px] flex justify-center"><Arrow /></div>
                <Tool item="s" />
                {row4.map((t, i) => <Tool key={i} item={t} />)}
            </div>

            <div className="h-[20px] shrink-0 border-t-2 border-[#a8a8a8] flex items-center text-black overflow-hidden leading-[20px]">
                <div className="w-[73px] h-full pl-[11px] border-r border-[#a8a8a8]">Slide 2 of 2</div>
                <div className="w-[483px] h-full pl-[9px] border-r border-[#a8a8a8]">TextEdit: Paragraph 1, Row 1, Column 1</div>
                <div className="w-[317px] h-full pl-[9px] border-r border-[#a8a8a8]">Default</div>
                <div className="w-[208px] h-full pl-[6px] flex items-center gap-[11px]">
                    <svg width="14" height="14"><path d="M5 4h8v8H5z" fill="none" stroke={GR} /><path d="M3 0v6M0 3h6" stroke={BL} /></svg>
                    0.55 / 1.45
                </div>
                <div className="w-[206px] h-full pl-[6px] flex items-center gap-[1px] border-r border-[#a8a8a8]">
                    <svg width="14" height="14"><path d="M0 5h13v7H0z" fill="none" stroke={GR} /><path d="M2 1h10M7 1v4" stroke={BL} /></svg>
                    <span className="ml-[3px]">9.92 x 4.54</span>
                </div>
                <div className="w-[24px] h-full flex items-center justify-center border-r border-[#a8a8a8]">
                    <svg width="10" height="12"><path d="M0 0h10v12H0z" fill="#e8798f" /><path d="M2 1h6v4H2zM2 8h6v4H2z" fill="#fff" /></svg>
                </div>
                <div className="w-[29px] h-full border-r border-[#a8a8a8]" />
                <div className="w-[350px] h-full pl-[140px] border-r border-[#a8a8a8]">English (USA)</div>
                <div className="w-[25px] h-full flex items-center justify-center border-r border-[#a8a8a8]"><Icon name="fit" size={16} /></div>
                <div className="w-[142px] h-full flex items-center pl-[8px] border-r border-[#a8a8a8]">
                    <div className="w-[10px] h-[2px] bg-[#666]" />
                    <div className="w-[98px] h-[2px] bg-[#888] ml-[5px] relative">
                        <div className="absolute left-[46px] -top-[4px] w-[4px] h-[10px] bg-[#666]" />
                    </div>
                    <svg width="10" height="10" className="ml-[5px]"><path d="M0 5h10M5 0v10" stroke="#666" strokeWidth="2" /></svg>
                </div>
                <div className="pl-[9px]">126%</div>
            </div>
        </div>
    );
}
